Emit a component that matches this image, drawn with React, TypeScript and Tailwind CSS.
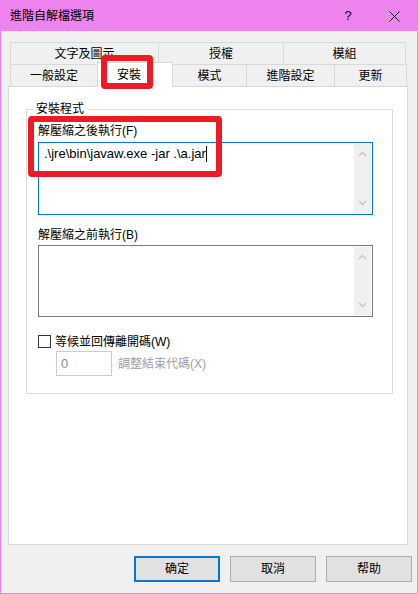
import React from "react";

const font = "font-['Liberation_Sans','Noto_Sans_CJK_TC',sans-serif]";

function Chevron(props: { up?: boolean }) {
    return (
        <svg width="9" height="6" viewBox="0 0 9 6" className="block">
            {props.up ? (
                <polyline points="1,5 4.5,1.5 8,5" fill="none" stroke="#c5c5c5" strokeWidth="1.3" />
            ) : (
                <polyline points="1,1 4.5,4.5 8,1" fill="none" stroke="#c5c5c5" strokeWidth="1.3" />
            )}
        </svg>
    );
}

function MemoBox(props: { text?: string; focused?: boolean; height: string }) {
    return (
        <div
            className={`flex w-[335px] bg-white border ${props.height} ${
                props.focused ? "border-[#0078d7]" : "border-[#7a7a7a]"
            }`}
        >
            <div className="flex-1 pl-[5px] pt-[3px] text-[13px] leading-[16px] text-black flex items-start">
                {props.text && (
                    <>
                        <span>{props.text}</span>
                        <span className="w-px h-[16px] bg-black" />
                    </>
                )}
            </div>
            <div className="w-[17px] my-px mr-px bg-[#f0f0f0] flex flex-col items-center justify-between py-[7px]">
                <Chevron up />
                <Chevron />
            </div>
        </div>
    );
}

function Tab(props: { label: string; w: string; last?: boolean; noLeft?: boolean }) {
    return (
        <div
            className={`${props.w} h-[22px] border-t border-[#d9d9d9] ${props.noLeft ? "" : "border-l"} ${
                props.last ? "border-r" : ""
            } bg-[#f0f0f0] flex items-center justify-center text-[12px] text-black`}
        >
            {props.label}
        </div>
    );
}

export default function App() {
    return (
        <div className={`relative w-[418px] h-[594px] border border-[#ee82ee] bg-[#f0f0f0] flex flex-col ${font}`}>
            {/* title bar */}
            <div className="h-[30px] bg-[#ee82ee] flex items-center pl-[9px] text-[12px] text-black">
                <span>進階自解檔選項</span>
                <div className="ml-auto flex h-full">
                    <div className="w-[46px] flex items-center justify-center text-[13px]">?</div>
                    <div className="w-[46px] flex items-center justify-center">
                        <svg width="11" height="11" viewBox="0 0 11 11">
                            <line x1="0.5" y1="0.5" x2="10.5" y2="10.5" stroke="#000" strokeWidth="1" />
                            <line x1="10.5" y1="0.5" x2="0.5" y2="10.5" stroke="#000" strokeWidth="1" />
                        </svg>
                    </div>
                </div>
            </div>

            <div className="flex flex-col px-[7px] pt-[11px]">
                {/* tab rows */}
                <div className="ml-[2px] flex">
                    <Tab label="文字及圖示" w="w-[148px]" />
                    <Tab label="授權" w="w-[125px]" />
                    <Tab label="模組" w="w-[123px]" last />
                </div>
                <div className="ml-[2px] flex h-[22px] items-start">
                    <Tab label="一般設定" w="w-[87px]" />
                    <div className="relative z-10 -mt-[2px] w-[76px] h-[25px] bg-white border-t border-l border-r border-[#d9d9d9] flex items-center justify-center pr-[12px] text-[12px] text-black">
                        安裝
                    </div>
                    <Tab label="模式" w="w-[73px]" noLeft />
                    <Tab label="進階設定" w="w-[88px]" />
                    <Tab label="更新" w="w-[73px]" last />
                </div>

                {/* tab page */}
                <div className="h-[459px] w-[400px] bg-white border border-[#d9d9d9] flex flex-col">
                    <div className="relative ml-[17px] mt-[22px] w-[367px] h-[285px] border border-[#dcdcdc] flex flex-col pl-[11px] text-[12px] text-black">
                        <span className="absolute -top-[9px] left-[6px] bg-white px-[3px] leading-[16px]">安裝程式</span>
                        <div className="mt-[13px] h-[16px] leading-[16px]">解壓縮之後執行(F)</div>
                        <div className="mt-[3px]">
                            <MemoBox text=".\jre\bin\javaw.exe -jar .\a.jar" focused height="h-[73px]" />
                        </div>
                        <div className="mt-[12px] h-[16px] leading-[16px]">解壓縮之前執行(B)</div>
                        <div className="mt-[2px]">
                            <MemoBox height="h-[72px]" />
                        </div>
                        <div className="mt-[18px] flex items-center h-[13px]">
                            <div className="w-[13px] h-[13px] border border-[#333333] bg-white" />
                            <span className="ml-[4px] leading-[16px]">等候並回傳離開碼(W)</span>
                        </div>
                        <div className="mt-[3px] ml-[18px] flex items-center">
                            <div className="w-[56px] h-[25px] border border-[#cccccc] bg-white flex items-center pl-[4px] text-[13px] text-[#8a8a8a]">
                                0
                            </div>
                            <span className="ml-[6px] text-[#a0a0a0]">調整結束代碼(X)</span>
                        </div>
                    </div>
                </div>

                {/* buttons */}
                <div className="mt-[11px] flex justify-end gap-[10px] mr-[-2px] text-[12px] text-black">
                    <button className="w-[86px] h-[26px] bg-[#e1e1e1] border-2 border-[#0078d7]">确定</button>
                    <button className="w-[86px] h-[26px] bg-[#e1e1e1] border border-[#adadad]">取消</button>
                    <button className="w-[86px] h-[26px] bg-[#e1e1e1] border border-[#adadad]">帮助</button>
                </div>
            </div>

            {/* red highlight annotations */}
            <div className="absolute left-[100px] top-[54px] w-[52px] h-[34px] border-[6px] border-[#ed1c24] rounded-[4px] z-20" />
            <div className="absolute left-[27px] top-[115px] w-[194px] h-[61px] border-[6px] border-[#ed1c24] rounded-[4px] z-20" />
        </div>
    );
}
